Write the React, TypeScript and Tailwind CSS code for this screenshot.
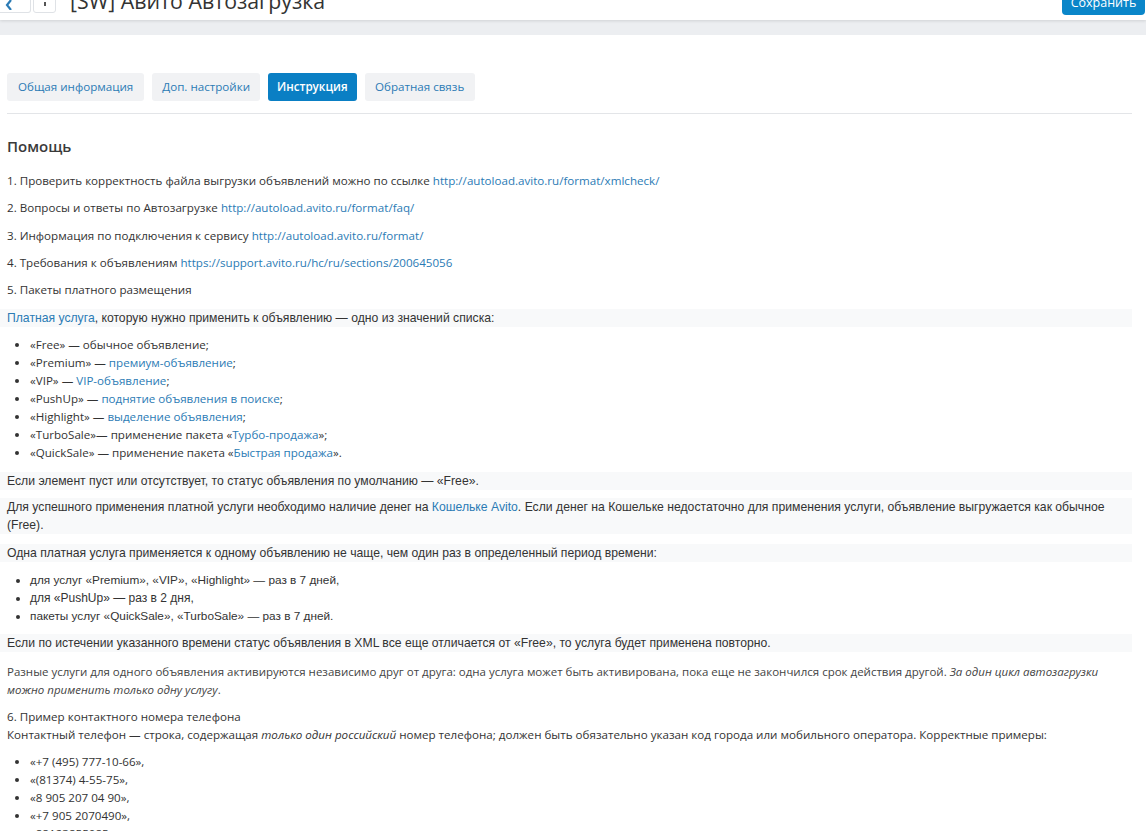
import React from "react";

const A = ({ children }: { children: React.ReactNode }) => (
  <a className="text-[#2b7bb5]">{children}</a>
);

export default function App() {
  const os = { fontFamily: '"Open Sans", sans-serif' };
  const ar = { fontFamily: '"Liberation Sans", Arial, sans-serif' };
  return (
    <div className="w-[1146px] h-[831px] overflow-hidden bg-white text-[#333]" style={os}>
      {/* header */}
      <div className="relative h-[20px] bg-white shadow-[0_1px_3px_rgba(0,0,0,0.12)] z-10 overflow-hidden">
        <div className="flex items-start h-full">
          <div className="w-[31px] h-[14px] mt-[-1px] border border-[#dfe2e6] border-l-0 rounded-br-[3px] flex items-end justify-end pr-[17px] pb-[2px]">
            <svg width="8" height="10" viewBox="0 0 8 10"><path d="M6 0 L2 5 L6 10" stroke="#2b7bb5" strokeWidth="2.2" fill="none" /></svg>
          </div>
          <div className="ml-[2px] w-[23px] h-[14px] mt-[-1px] border border-[#dfe2e6] rounded-b-[3px] flex justify-center">
            <div className="w-[2px] h-[4px] bg-[#555] mt-[2px]" />
          </div>
          <div className="ml-[14px] mt-[-13px] text-[21.3px] leading-[28px] text-[#333] whitespace-nowrap">[SW] Авито Автозагрузка</div>
          <div className="ml-auto mr-[1px] mt-[-10px] h-[25px] w-[83px] rounded-[4px] bg-[#0a86c9] text-white text-[12.5px] leading-[25px] text-center">Сохранить</div>
        </div>
      </div>
      <div className="h-[15px] bg-[#eceef1]" />

      <div className="pl-[7px] pr-[14px]">
        {/* tabs */}
        <div className="flex gap-[8px] mt-[38px] h-[28px] text-[11.6px]">
          <div className="px-[11px] bg-[#f1f2f4] text-[#2b7bb5] rounded-[3px] leading-[28px]">Общая информация</div>
          <div className="px-[10px] bg-[#f1f2f4] text-[#2b7bb5] rounded-[3px] leading-[28px]">Доп. настройки</div>
          <div className="px-[9px] bg-[#0a7fc4] text-white font-semibold rounded-[3px] leading-[28px]">Инструкция</div>
          <div className="px-[10.5px] bg-[#f1f2f4] text-[#2b7bb5] rounded-[3px] leading-[28px]">Обратная связь</div>
        </div>
        <div className="mt-[12px] h-px bg-[#e3e5e8]" />

        <div className="mt-[22px] text-[15px] font-semibold leading-[20px] text-[#3a3a3a]">Помощь</div>

        <div className="text-[11.6px] leading-[18px] mt-[16px] flex flex-col gap-[9.3px]">
          <div>1. Проверить корректность файла выгрузки объявлений можно по ссылке <A>http://autoload.avito.ru/format/xmlcheck/</A></div>
          <div>2. Вопросы и ответы по Автозагрузке <A>http://autoload.avito.ru/format/faq/</A></div>
          <div>3. Информация по подключения к сервису <A>http://autoload.avito.ru/format/</A></div>
          <div>4. Требования к объявлениям <A>https://support.avito.ru/hc/ru/sections/200645056</A></div>
          <div>5. Пакеты платного размещения</div>
        </div>

        <div className="mt-[10px] bg-[#f8f9fa] -ml-[7px] pl-[7px] text-[12.2px] leading-[18px]" style={ar}>
          <A>Платная услуга</A>, которую нужно применить к объявлению — одно из значений списка:
        </div>

        <ul className="list-disc pl-[23px] mt-[9px] text-[11.6px] leading-[18px]">
          <li>«Free» — обычное объявление;</li>
          <li>«Premium» — <A>премиум-объявление</A>;</li>
          <li>«VIP» — <A>VIP-объявление</A>;</li>
          <li>«PushUp» — <A>поднятие объявления в поиске</A>;</li>
          <li>«Highlight» — <A>выделение объявления</A>;</li>
          <li>«TurboSale»— применение пакета «<A>Турбо-продажа</A>»;</li>
          <li>«QuickSale» — применение пакета «<A>Быстрая продажа</A>».</li>
        </ul>

        <div style={ar} className="text-[12.2px] leading-[18px]">
          <div className="mt-[10px] bg-[#f8f9fa] -ml-[7px] pl-[7px] py-0">Если элемент пуст или отсутствует, то статус объявления по умолчанию — «Free».</div>
          <div className="mt-[8px] bg-[#f8f9fa] -ml-[7px] pl-[7px] pr-[20px]">
            Для успешного применения платной услуги необходимо наличие денег на <A>Кошельке Avito</A>. Если денег на Кошельке недостаточно для применения услуги, объявление выгружается как обычное<br />(Free).
          </div>
          <div className="mt-[10px] bg-[#f8f9fa] -ml-[7px] pl-[7px]">Одна платная услуга применяется к одному объявлению не чаще, чем один раз в определенный период времени:</div>
          <ul className="list-disc pl-[23px] mt-[9px]">
            <li className="text-[11.8px]">для услуг «Premium», «VIP», «Highlight» — раз в 7 дней,</li>
            <li className="text-[12px]">для «PushUp» — раз в 2 дня,</li>
            <li className="text-[11.8px]">пакеты услуг «QuickSale», «TurboSale» — раз в 7 дней.</li>
          </ul>
          <div className="mt-[9px] bg-[#f8f9fa] -ml-[7px] pl-[7px]">Если по истечении указанного времени статус объявления в XML все еще отличается от «Free», то услуга будет применена повторно.</div>
        </div>

        <div className="mt-[11px] text-[11.5px] leading-[18px] text-[#444]">
          Разные услуги для одного объявления активируются независимо друг от друга: одна услуга может быть активирована, пока еще не закончился срок действия другой. <i>За один цикл автозагрузки<br />можно применить только одну услугу</i>.
        </div>

        <div className="mt-[9px] text-[11.6px] leading-[18px]">
          <div>6. Пример контактного номера телефона</div>
          <div>Контактный телефон — строка, содержащая <i>только один российский</i> номер телефона; должен быть обязательно указан код города или мобильного оператора. Корректные примеры:</div>
        </div>
        <ul className="list-disc pl-[23px] mt-[9px] text-[11.6px] leading-[18px]">
          <li>«+7 (495) 777-10-66»,</li>
          <li>«(81374) 4-55-75»,</li>
          <li>«8 905 207 04 90»,</li>
          <li>«+7 905 2070490»,</li>
          <li>«88123855085»,</li>
        </ul>
      </div>
    </div>
  );
}
